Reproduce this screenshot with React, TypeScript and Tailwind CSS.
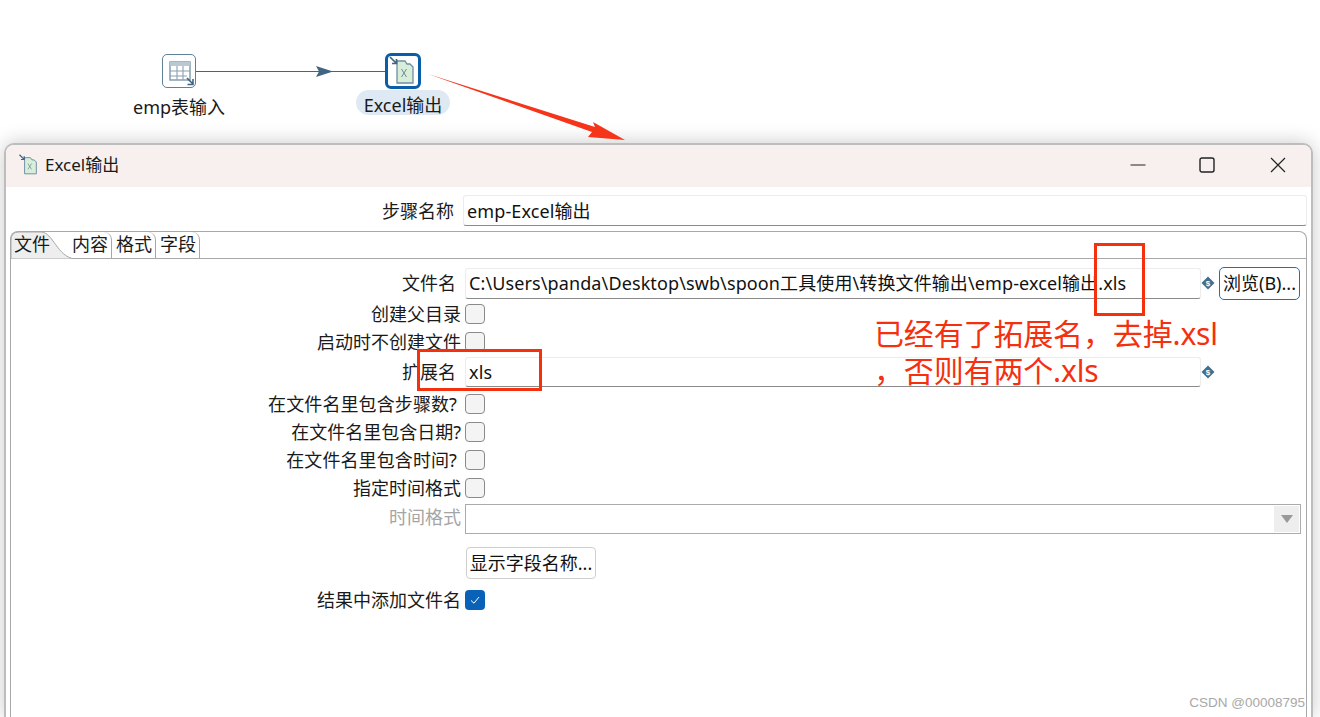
const fontBase = "font-['Noto_Sans','Noto_Sans_CJK_SC',sans-serif]";

function OutputIcon({ size = 30 }: { size?: number }) {
  return (
    <svg width={size} height={size} viewBox="0 0 30 30" fill="none">
      <path d="M9 5h8l2 3h3l3 3v16H9z" fill="#d8eed8" stroke="#6d8ea3" strokeWidth="1.3" />
      <path d="M13.5 13l5 8M18.5 13l-5 8" stroke="#6d8a9c" strokeWidth="1" />
      <path d="M2 1l6 6M8.5 3v4.5H4" stroke="#3f6584" strokeWidth="1.7" />
    </svg>
  );
}

function VarIcon() {
  return (
    <svg width="14" height="14" viewBox="0 0 14 14" className="shrink-0">
      <path d="M7 0.5L13.5 7 7 13.5 0.5 7z" fill="#41708f" />
      <text x="7" y="10" textAnchor="middle" fontSize="8" fontWeight="700" fill="#fff" fontFamily="Liberation Sans">
        $
      </text>
    </svg>
  );
}

function Checkbox({ checked = false }: { checked?: boolean }) {
  if (checked) {
    return (
      <div className="flex h-5 w-5 items-center justify-center rounded-[4px] bg-[#0a62b8]">
        <svg width="12" height="12" viewBox="0 0 12 12" fill="none">
          <path d="M2 6.5L5 9.2 10 3" stroke="#fff" strokeWidth="1" />
        </svg>
      </div>
    );
  }
  return <div className="h-5 w-5 rounded-[4px] border border-[#8a8a8a] bg-[#f4f4f4]" />;
}

function Row({ label, h, muted, inset, children }: { label: string; h: string; muted?: boolean; inset?: boolean; children: React.ReactNode }) {
  return (
    <div className={`flex items-center ${h}`}>
      <div className={`w-[455px] text-right whitespace-nowrap ${inset ? "pr-1 tracking-[0.1px]" : ""} ${muted ? "text-[#a5a5a5]" : "text-[#1a1a1a]"}`}>{label}</div>
      <div className="ml-1 flex-1">{children}</div>
    </div>
  );
}

function TextBox({ value, className }: { value: string; className: string }) {
  return (
    <div className={`flex items-center rounded-[3px] border border-[#ececec] border-b-[#8a8a8a] bg-white pl-[3px] tracking-[0.11px] text-[#111] whitespace-nowrap ${className}`}>
      {value}
    </div>
  );
}

export default function App() {
  return (
    <div className={`relative h-[717px] w-[1320px] overflow-hidden bg-white text-[18px] leading-6 ${fontBase}`}>
      {/* Canvas with the two steps */}
      <div className="relative h-[143px]">
        <div className="absolute left-[162px] top-[54px] flex h-[34px] w-[34px] items-center justify-center rounded-[5px] border border-[#5f8198] bg-white">
          <svg width="30" height="30" viewBox="0 0 30 30" fill="none">
            <rect x="6" y="6" width="20" height="18" fill="#fff" stroke="#7f98aa" strokeWidth="1.4" />
            <rect x="6" y="6" width="20" height="4" fill="#b9c9d4" />
            <path d="M6 15h20M6 20h17M13 10v14M19 10v14" stroke="#8aa1b2" strokeWidth="1.1" />
            <path d="M23 22l6 6M29 23v5.500h-5.500" stroke="#3f6584" strokeWidth="1.6" />
          </svg>
        </div>
        <div className="absolute left-[133px] top-[95px] text-[#1a1a1a]">emp表输入</div>
        <svg className="absolute left-[196px] top-[60px]" width="190" height="24" viewBox="0 0 190 24" fill="none">
          <path d="M0 11.500h190" stroke="#46667e" strokeWidth="1.2" />
          <path d="M120 6l17 5.500-17 5.500 3-5.500z" fill="#3f6584" />
        </svg>
        <div className="absolute left-[385px] top-[53px] flex h-9 w-9 items-center justify-center rounded-[6px] border-[3px] border-[#0a5ea8] bg-white">
          <OutputIcon />
        </div>
        <div className="absolute left-[356px] top-[90px] h-[25px] w-[94px] rounded-[13px] bg-[#dfe9f3] pt-[3px] text-center text-[#1a1a1a]">Excel输出</div>
      </div>

      {/* Dialog */}
      <div className="relative ml-1 h-[574px] w-[1309px] rounded-t-[10px] border-x-2 border-t-2 border-[#bdbdbd] bg-white shadow-[0_0_20px_rgba(0,0,0,0.22)]">
        <div className="flex h-[42px] items-center rounded-t-[8px] bg-[#f7f0ee] pb-[3px] pl-3">
          <OutputIcon size={22} />
          <span className="ml-[5px] text-[17px] text-[#1a1a1a]">Excel输出</span>
          <div className="ml-auto flex items-center">
            <svg width="16" height="16" viewBox="0 0 16 16" fill="none" className="mr-[53px]">
              <path d="M0.500 8h15" stroke="#222" strokeWidth="1" />
            </svg>
            <svg width="16" height="16" viewBox="0 0 16 16" fill="none" className="mr-[55px]">
              <rect x="1" y="1" width="14" height="14" rx="2" stroke="#222" strokeWidth="1.4" />
            </svg>
            <svg width="16" height="16" viewBox="0 0 16 16" fill="none" className="mr-[25px]">
              <path d="M1 1l14 14M15 1L1 15" stroke="#222" strokeWidth="1.2" />
            </svg>
          </div>
        </div>

        {/* Step name */}
        <div className="flex h-[44px] items-center pt-[3px]">
          <div className="w-[448px] text-right text-[#1a1a1a]">步骤名称</div>
          <TextBox value="emp-Excel输出" className="ml-[9px] h-[31px] w-[844px]" />
        </div>

        {/* Tab folder */}
        <div className="ml-1 mr-1 h-[487px] rounded-t-[8px] border-x border-t border-[#a8a8a8]">
          <div className="flex h-[27px] border-b border-[#a8a8a8]">
            <div className="relative w-[60px]">
              <svg className="absolute left-0 top-0" width="64" height="27" viewBox="0 0 64 27">
                <path d="M0 27V8Q0 0 8 0H30C42 0 46 25 64 27Z" fill="#eeeeee" stroke="#a8a8a8" strokeWidth="1" />
              </svg>
              <span className="absolute left-[3px] top-[0px] text-[#1a1a1a]">文件</span>
            </div>
            <div className="w-[41px] rounded-tr-[8px] border-r border-[#a8a8a8] pl-[1px] text-[#1a1a1a]">内容</div>
            <div className="w-[44px] rounded-tr-[8px] border-r border-[#a8a8a8] pl-[4px] text-[#1a1a1a]">格式</div>
            <div className="w-[44px] rounded-tr-[8px] border-r border-[#a8a8a8] pl-[4px] text-[#1a1a1a]">字段</div>
          </div>

          <div className="-ml-[5px] pt-[7px]">
            <div className="flex h-[34px] items-center">
              <div className="w-[450px] text-right text-[#1a1a1a]">文件名</div>
              <TextBox value="C:\Users\panda\Desktop\swb\spoon工具使用\转换文件输出\emp-excel输出.xls" className="ml-[9px] h-[31px] w-[736px]" />
              <div className="flex w-[13px] justify-center"><VarIcon /></div>
              <div className="ml-[5px] flex h-[33px] w-[81px] items-center justify-center rounded-[5px] border border-[#1273c9] bg-white text-[#111]">浏览(B)...</div>
            </div>
            <Row label="创建父目录" h="h-[28px]"><Checkbox /></Row>
            <Row label="启动时不创建文件" h="h-[28px]"><Checkbox /></Row>
            <div className="flex h-[32px] items-center">
              <div className="w-[450px] text-right text-[#1a1a1a]">扩展名</div>
              <TextBox value="xls" className="ml-[9px] h-[30px] w-[736px]" />
              <div className="flex w-[13px] justify-center"><VarIcon /></div>
            </div>
            <Row label="在文件名里包含步骤数?" inset h="h-[28px] mt-[2px]"><Checkbox /></Row>
            <Row label="在文件名里包含日期?" h="h-[28px]"><Checkbox /></Row>
            <Row label="在文件名里包含时间?" inset h="h-[28px]"><Checkbox /></Row>
            <Row label="指定时间格式" h="h-[28px]"><Checkbox /></Row>
            <Row label="时间格式" muted h="h-[29px]">
              <div className="mt-[4px] flex h-[30px] w-[836px] justify-end border border-[#ababab] bg-white p-[1px]">
                <div className="flex w-[25px] items-center justify-center bg-[#eeeeee]">
                  <svg width="14" height="10" viewBox="0 0 14 10"><path d="M1 1h12L7 9z" fill="#999" /></svg>
                </div>
              </div>
            </Row>
            <div className="mt-[16px] ml-[460px] flex h-[32px] w-[130px] items-center justify-center rounded-[4px] border border-[#cfcfcf] bg-white text-[#111]">显示字段名称...</div>
            <Row label="结果中添加文件名" h="h-[28px] mt-[7px]"><Checkbox checked /></Row>
          </div>
        </div>

        <div className="absolute bottom-[6px] right-[6px] font-['Liberation_Sans',sans-serif] text-[13.5px] leading-4 text-[#a8a8a8]">CSDN @00008795</div>
      </div>

      {/* Annotations drawn over the screenshot */}
      <svg className="absolute left-[425px] top-[70px]" width="205" height="75" viewBox="0 0 205 75" fill="none">
        <path d="M3 4L170 57 168 52 200 70 163 67 167 62z" fill="#f5341a" />
      </svg>
      <div className="absolute left-[1094px] top-[243px] h-[73px] w-[51px] border-[3px] border-[#f5300f]" />
      <div className="absolute left-[417px] top-[349px] h-[42px] w-[125px] border-[3px] border-[#f5300f]" />
      <div className="absolute left-[874px] top-[315px] w-[350px] text-[30px] leading-[37px] tracking-[-0.15px] text-[#f5300f]">
        <div className="whitespace-nowrap">已经有了拓展名，去掉.xsl</div>
        <div className="whitespace-nowrap">，否则有两个.xls</div>
      </div>
    </div>
  );
}
